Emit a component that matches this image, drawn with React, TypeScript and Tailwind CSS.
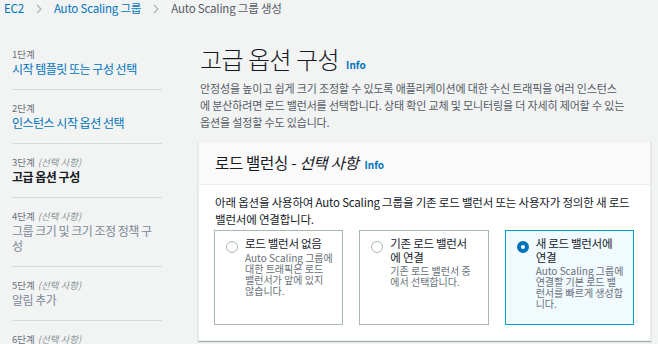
import React from 'react';

const STEPS = [
  { label: '1단계', optional: false, title: ['시작 템플릿 또는 구성 선택'], state: 'done' },
  { label: '2단계', optional: false, title: ['인스턴스 시작 옵션 선택'], state: 'done' },
  { label: '3단계', optional: true, title: ['고급 옵션 구성'], state: 'current' },
  { label: '4단계', optional: true, title: ['그룹 크기 및 크기 조정 정책 구', '성'], state: 'todo' },
  { label: '5단계', optional: true, title: ['알림 추가'], state: 'todo' },
  { label: '6단계', optional: true, title: ['태그 추가'], state: 'todo' },
] as const;

const OPTIONS = [
  {
    title: ['로드 밸런서 없음'],
    desc: ['Auto Scaling 그룹에', '대한 트래픽은 로드', '밸런서가 앞에 있지', '않습니다.'],
    selected: false,
  },
  {
    title: ['기존 로드 밸런서', '에 연결'],
    desc: ['기존 로드 밸런서 중', '에서 선택합니다.'],
    selected: false,
  },
  {
    title: ['새 로드 밸런서에', '연결'],
    desc: ['Auto Scaling 그룹에', '연결할 기본 로드 밸', '런서를 빠르게 생성합', '니다.'],
    selected: true,
  },
];

function Chevron() {
  return (
    <svg width="6" height="10" viewBox="0 0 6 10" fill="none" stroke="#aab7b8" strokeWidth={1.3}>
      <path d="M1 1l4 4-4 4" />
    </svg>
  );
}

function Lines({ lines }: { lines: readonly string[] }) {
  return (
    <>
      {lines.map((l, i) => (
        <div key={i} className="whitespace-nowrap">{l}</div>
      ))}
    </>
  );
}

function Radio({ checked }: { checked: boolean }) {
  return checked ? (
    <div className="w-[12px] h-[12px] rounded-full border-[4px] border-[#0073bb] bg-white shrink-0" />
  ) : (
    <div className="w-[12px] h-[12px] rounded-full border border-[#aab7b8] bg-white shrink-0" />
  );
}

export default function App() {
  return (
    <div className="w-[658px] h-[344px] overflow-hidden bg-[#f2f3f3] text-[#16191f] font-['Noto_Sans_CJK_KR',sans-serif]">
      {/* Breadcrumb */}
      <div className="h-[17px] pl-1 flex items-center gap-3 text-[11.5px] tracking-[-0.2px]">
        <span className="text-[#0073bb]">EC2</span>
        <Chevron />
        <span className="text-[#0073bb]">Auto Scaling 그룹</span>
        <Chevron />
        <span className="text-[#545b64]">Auto Scaling 그룹 생성</span>
      </div>

      <div className="flex">
        {/* Steps */}
        <div className="ml-3 w-[150px] mt-[19px] shrink-0">
          {STEPS.map((s, i) => (
            <div key={s.label} className={`pt-[11px] pb-[13px] ${i > 0 ? 'border-t border-[#d5dbdb]' : ''}`}>
              <div className="text-[9.5px] leading-[14px] text-[#687078]">
                {s.label}
                {s.optional && <i className="ml-[3px] text-[#879596]">(선택 사항)</i>}
              </div>
              <div
                className={`text-[12px] leading-[15px] tracking-[-0.5px] ${
                  s.state === 'done'
                    ? 'text-[#0073bb]'
                    : s.state === 'current'
                    ? 'text-[#16191f] font-bold'
                    : 'text-[#7d8998]'
                }`}
              >
                <Lines lines={s.title} />
              </div>
            </div>
          ))}
        </div>

        {/* Main */}
        <div className="ml-[36px] w-[453px] shrink-0">
          <div className="mt-[28px] pl-[2px] flex items-baseline gap-[7px]">
            <h1 className="text-[24px] leading-[28px] tracking-[-0.5px] font-light">고급 옵션 구성</h1>
            <span className="text-[10px] font-bold text-[#0073bb]">Info</span>
          </div>
          <div className="mt-[7px] pl-[2px] text-[11px] leading-[17px] tracking-[-0.15px] text-[#545b64]">
            <Lines
              lines={[
                '안정성을 높이고 쉽게 크기 조정할 수 있도록 애플리케이션에 대한 수신 트래픽을 여러 인스턴스',
                '에 분산하려면 로드 밸런서를 선택합니다. 상태 확인 교체 및 모니터링을 더 자세히 제어할 수 있는',
                '옵션을 설정할 수도 있습니다.',
              ]}
            />
          </div>

          {/* Load balancing card */}
          <div className="mt-[10px] bg-white border border-[#eaeded] shadow-[0_1px_1px_0_rgba(0,28,36,0.3)]">
            <div className="h-[43px] px-4 flex items-center gap-[6px] bg-[#fafafa] border-b border-[#eaeded]">
              <span className="text-[15.5px] tracking-[-0.3px]">
                로드 밸런싱 - <i>선택 사항</i>
              </span>
              <span className="text-[10px] font-bold text-[#0073bb] mt-[3px]">Info</span>
            </div>
            <div className="pt-[9px] pb-[15px] pl-[15px] pr-[16px]">
              <div className="pl-px text-[11.5px] leading-[17px] tracking-[-0.2px]">
                <Lines
                  lines={[
                    '아래 옵션을 사용하여 Auto Scaling 그룹을 기존 로드 밸런서 또는 사용자가 정의한 새 로드',
                    '밸런서에 연결합니다.',
                  ]}
                />
              </div>
              <div className="mt-[2px] grid grid-cols-3 gap-4">
                {OPTIONS.map((o, i) => (
                  <div
                    key={i}
                    className={`h-[95px] border pt-[6px] pl-[11px] flex gap-[7px] ${
                      o.selected ? 'border-[#00a1c9] bg-[#f1faff]' : 'border-[#aab7b8] bg-white'
                    }`}
                  >
                    <div className="mt-[4px]">
                      <Radio checked={o.selected} />
                    </div>
                    <div className="w-[88px]">
                      <div className="text-[11.5px] leading-[13.5px] tracking-[-0.3px]">
                        <Lines lines={o.title} />
                      </div>
                      <div className="mt-px text-[10px] leading-[11px] text-[#687078]">
                        <Lines lines={o.desc} />
                      </div>
                    </div>
                  </div>
                ))}
              </div>
            </div>
          </div>
        </div>
      </div>
    </div>
  );
}
